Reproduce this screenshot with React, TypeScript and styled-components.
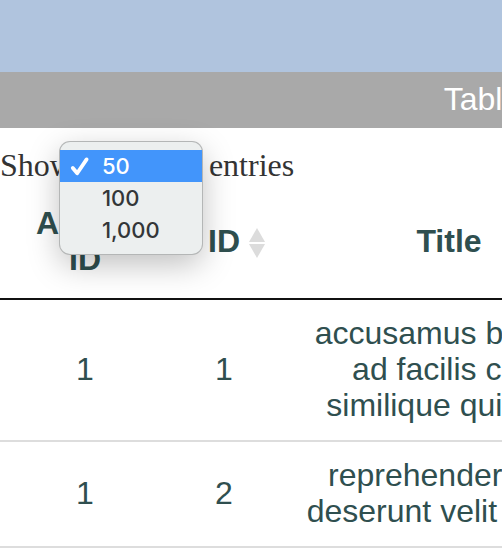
import React, { useState } from "react";
import styled, { createGlobalStyle } from "styled-components";

const GlobalStyle = createGlobalStyle`
  body {
    margin: 0;
    background: #fff;
    overflow: hidden;
  }
`;

const Page = styled.main`
  min-width: 964px;
  font-family: "Liberation Sans", Arial, sans-serif;
  font-size: 32px;
  line-height: 36px;
  color: #2f4f4f;
`;

const Banner = styled.header`
  height: 72px;
  background: #b0c4de;
`;

const Heading = styled.h1`
  margin: 0;
  padding: 9px 0 11px;
  background: #a9a9a9;
  color: #fff;
  font-size: 32px;
  font-weight: 400;
  text-align: center;
`;

const LengthControl = styled.div`
  display: flex;
  align-items: center;
  gap: 8px;
  padding: 19px 0 2px;
  font-family: "Liberation Serif", "Times New Roman", serif;
  color: #333;
`;

const SelectWrap = styled.div`
  position: relative;
  display: flex;
  width: 120px;
`;

const LengthSelect = styled.select`
  width: 100%;
  height: 36px;
  font-family: Inter, sans-serif;
  font-size: 24px;
`;

const Menu = styled.div`
  position: absolute;
  z-index: 1;
  top: -5px;
  left: -21px;
  width: 142px;
  padding: 8px 0;
  border-radius: 10px;
  background: #ecefef;
  box-shadow: 0 0 0 1px #b4b6b6, 0 10px 32px rgba(0, 0, 0, 0.26);
`;

const Option = styled.button<{ $active: boolean }>`
  display: flex;
  align-items: center;
  gap: 12px;
  width: 100%;
  height: 32px;
  padding: 0 10px;
  border: 0;
  background: ${(p) => (p.$active ? "#4295fb" : "transparent")};
  color: ${(p) => (p.$active ? "#fff" : "#333638")};
  font-family: Inter, sans-serif;
  font-size: 22px;
  font-weight: 500;
  text-align: left;
`;

const CheckSlot = styled.svg`
  flex: none;
  width: 20px;
  height: 20px;
`;

const Table = styled.table`
  width: 620px;
  table-layout: fixed;
  border-collapse: separate;
  border-spacing: 0;
`;

const HeadCell = styled.th<{ $width: number }>`
  box-sizing: border-box;
  width: ${(p) => p.$width}px;
  padding: 20px 36px 21px;
  border-bottom: 2px solid #111;
  vertical-align: middle;
`;

const SortLabel = styled.span`
  position: relative;
`;

const SortIcon = styled.svg`
  position: absolute;
  top: 5px;
  left: calc(100% + 9px);
  width: 16px;
  height: 30px;
  fill: #dcdcdc;
`;

const Row = styled.tr`
  & > td {
    border-bottom: 2px solid #ddd;
  }
`;

const Cell = styled.td`
  padding: 15px 20px 17px;
  text-align: center;
  vertical-align: middle;
`;

const lengths = ["50", "100", "1,000"];

const records = [
  { album: 1, id: 1, title: "accusamus beatae ad facilis cum similique qui sunt" },
  { album: 1, id: 2, title: "reprehenderit est deserunt velit ipsam" },
];

export default function App() {
  const [length, setLength] = useState("50");

  return (
    <>
      <GlobalStyle />
      <Page>
        <Banner />
        <Heading>Table</Heading>
        <LengthControl>
          <label htmlFor="length">Show</label>
          <SelectWrap>
            <LengthSelect
              id="length"
              value={length}
              onChange={(e) => setLength(e.target.value)}
            >
              {lengths.map((value) => (
                <option key={value}>{value}</option>
              ))}
            </LengthSelect>
            <Menu role="listbox" aria-label="Entries">
              {lengths.map((value) => (
                <Option
                  key={value}
                  type="button"
                  role="option"
                  aria-selected={value === length}
                  $active={value === length}
                  onClick={() => setLength(value)}
                >
                  <CheckSlot viewBox="0 0 20 20" aria-hidden="true">
                    {value === length && (
                      <path
                        d="M2.8 12 7.2 17.2 16.6 3.4"
                        fill="none"
                        stroke="#fff"
                        strokeWidth="3.8"
                        strokeLinecap="round"
                        strokeLinejoin="round"
                      />
                    )}
                  </CheckSlot>
                  {value}
                </Option>
              ))}
            </Menu>
          </SelectWrap>
          <span>entries</span>
        </LengthControl>
        <Table>
          <thead>
            <tr>
              <HeadCell $width={170}>Album ID</HeadCell>
              <HeadCell $width={108}>
                <SortLabel>
                  ID
                  <SortIcon viewBox="0 0 16 30" aria-hidden="true">
                    <path d="M8 0 16 14H0Z" />
                    <path d="M0 16H16L8 30Z" />
                  </SortIcon>
                </SortLabel>
              </HeadCell>
              <HeadCell $width={342}>Title</HeadCell>
            </tr>
          </thead>
          <tbody>
            {records.map((record) => (
              <Row key={record.id}>
                <Cell>{record.album}</Cell>
                <Cell>{record.id}</Cell>
                <Cell>{record.title}</Cell>
              </Row>
            ))}
          </tbody>
        </Table>
      </Page>
    </>
  );
}
